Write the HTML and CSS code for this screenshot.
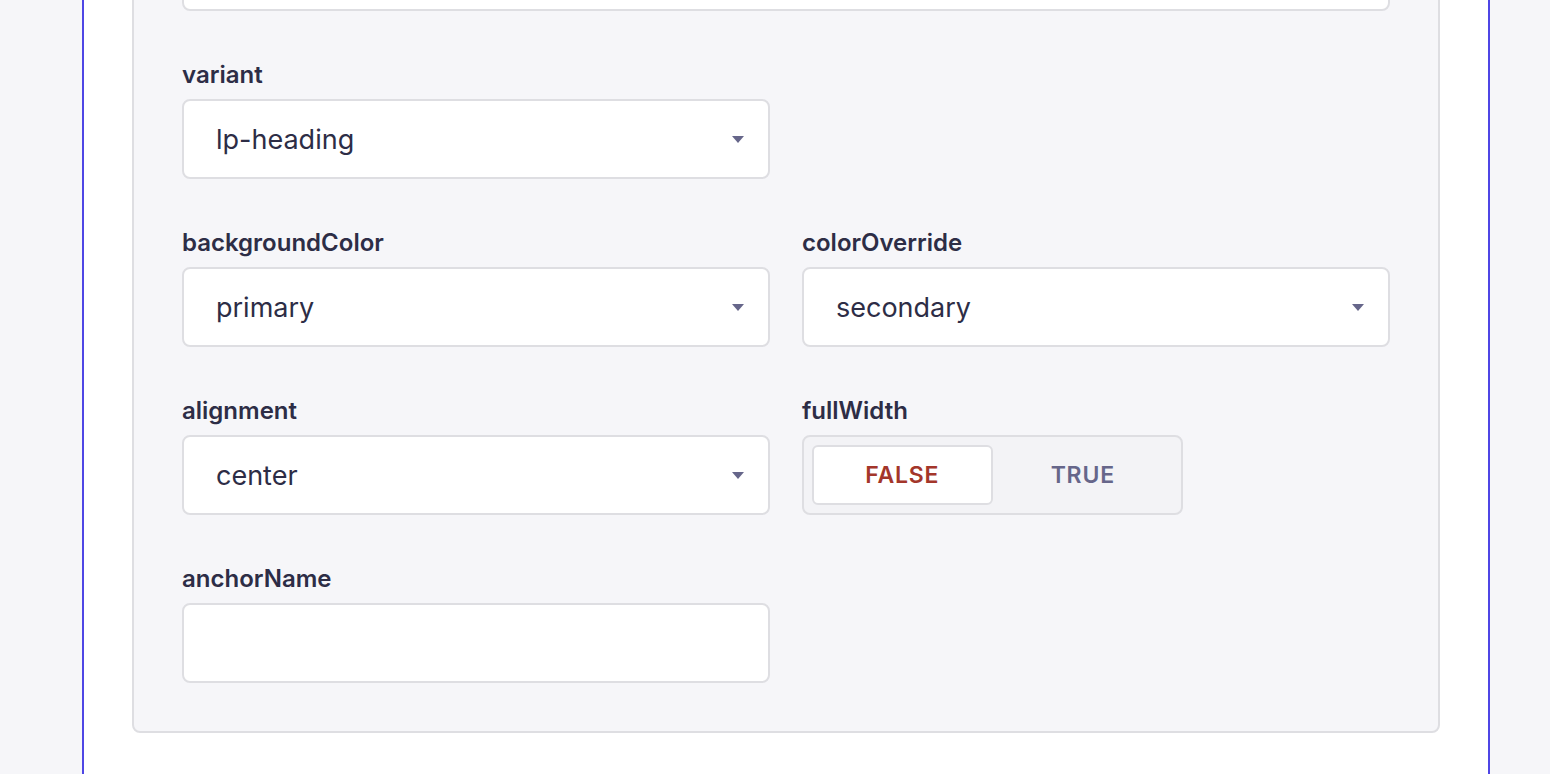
FILE: index.html
```html
<!DOCTYPE html>
<html>
<head>
<meta charset="utf-8">
<link rel="stylesheet" href="styles.css">
</head>
<body>
<div class="page">
  <div class="panel">
    <div class="card">
      <div class="grid">
        <div class="field full">
          <div class="input"></div>
        </div>
        <div class="field">
          <label class="label">variant</label>
          <div class="select"><span class="value">lp-heading</span><span class="caret"></span></div>
        </div>
        <div class="field"></div>
        <div class="field">
          <label class="label">backgroundColor</label>
          <div class="select"><span class="value">primary</span><span class="caret"></span></div>
        </div>
        <div class="field">
          <label class="label">colorOverride</label>
          <div class="select"><span class="value">secondary</span><span class="caret"></span></div>
        </div>
        <div class="field">
          <label class="label">alignment</label>
          <div class="select"><span class="value">center</span><span class="caret"></span></div>
        </div>
        <div class="field">
          <label class="label">fullWidth</label>
          <div class="toggle">
            <span class="opt active">FALSE</span>
            <span class="opt">TRUE</span>
          </div>
        </div>
        <div class="field">
          <label class="label">anchorName</label>
          <div class="input"></div>
        </div>
      </div>
    </div>
  </div>
</div>
</body>
</html>
```

FILE: styles.css
```css
html, body {
  margin: 0;
  padding: 0;
  background: #f6f6f9;
  font-family: Inter, "Liberation Sans", sans-serif;
  color: #2d2d46;
  overflow: hidden;
}
.page {
  margin-top: -119px;
  padding-left: 82px;
}
.panel {
  width: 1408px;
  box-sizing: border-box;
  background: #ffffff;
  border-left: 2px solid #4f46e5;
  border-right: 2px solid #4f46e5;
  padding: 0 48px 200px;
}
.card {
  background: #f6f6f9;
  border: 2px solid #dedee2;
  border-radius: 8px;
  padding: 48px;
}
.grid {
  display: grid;
  grid-template-columns: 588px 588px;
  column-gap: 32px;
  row-gap: 52px;
}
.field.full {
  grid-column: 1 / 3;
}
.label {
  display: block;
  font-size: 24px;
  line-height: 24px;
  font-weight: 600;
  color: #2d2d46;
  margin-bottom: 12px;
}
.select, .input {
  height: 80px;
  box-sizing: border-box;
  background: #ffffff;
  border: 2px solid #dedee2;
  border-radius: 8px;
  display: flex;
  align-items: center;
  padding: 0 24px 0 32px;
}
.value {
  flex: 1;
  font-size: 27px;
  color: #2d2d46;
}
.caret {
  width: 0;
  height: 0;
  border-left: 6px solid transparent;
  border-right: 6px solid transparent;
  border-top: 7px solid #66668a;
}
.toggle {
  width: 381px;
  height: 80px;
  box-sizing: border-box;
  border: 2px solid #dedee2;
  border-radius: 8px;
  background: #f3f3f6;
  padding: 8px;
  display: flex;
}
.opt {
  flex: 1;
  display: flex;
  align-items: center;
  justify-content: center;
  font-size: 23px;
  font-weight: 600;
  letter-spacing: 0.8px;
  color: #66668a;
  border-radius: 6px;
  border: 2px solid transparent;
}
.opt.active {
  background: #ffffff;
  border-color: #dedee2;
  color: #a3362a;
}
```
